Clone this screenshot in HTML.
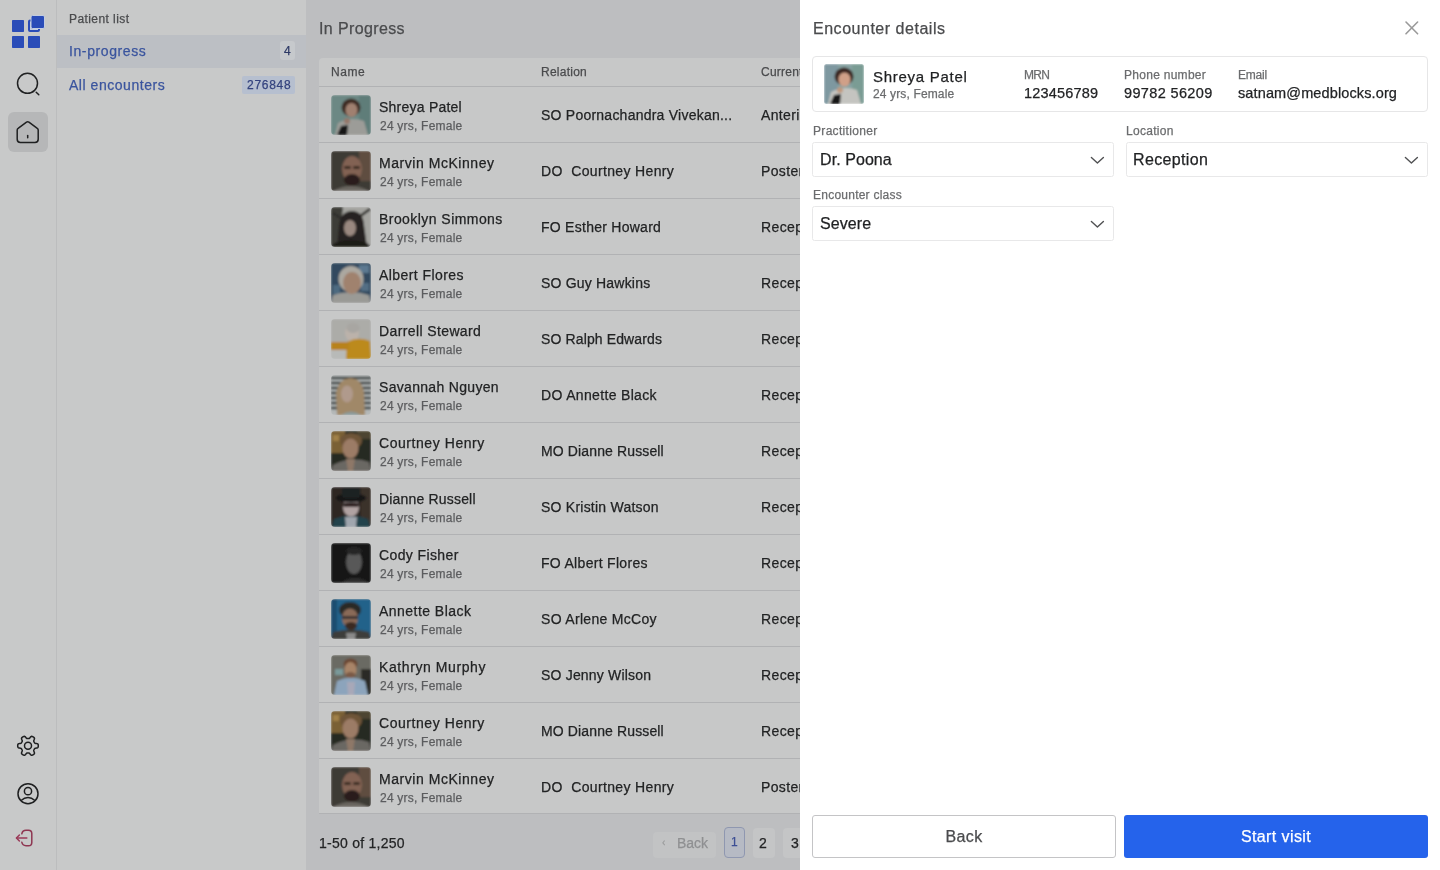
<!DOCTYPE html>
<html><head><meta charset="utf-8">
<style>
*{box-sizing:border-box;margin:0;padding:0}
html,body{width:1440px;height:870px;overflow:hidden;font-family:"Liberation Sans",sans-serif;background:#fff;position:relative}
.abs{position:absolute}
.t{position:absolute;white-space:nowrap;line-height:1;will-change:transform;-webkit-text-stroke:0.25px currentColor}
</style></head><body>
<div class="abs" style="left:0px;top:0px;width:56px;height:870px;background:#c8c9c9"></div>
<div class="abs" style="left:56px;top:0px;width:1px;height:870px;background:#bcbdbe"></div>
<svg class="abs" style="left:0;top:0" width="56" height="60" viewBox="0 0 56 60">
<rect x="12" y="20" width="12" height="12" rx="0.7" fill="#2a4cb8"/>
<rect x="12" y="36" width="12" height="12" rx="0.7" fill="#2a4cb8"/>
<rect x="28" y="36" width="12" height="12" rx="0.7" fill="#2a4cb8"/>
<rect x="29" y="20.5" width="10" height="10.5" rx="1" fill="#c3cde0" stroke="#2a4cb8" stroke-width="2"/>
<rect x="31" y="15.5" width="13.5" height="13" rx="1.5" fill="#2a4cb8" stroke="#c3cde0" stroke-width="1"/>
</svg>
<svg class="abs" style="left:8px;top:64px" width="40" height="40" viewBox="0 0 40 40">
<circle cx="19.5" cy="19.3" r="10" fill="none" stroke="#1f2021" stroke-width="1.5"/>
<line x1="28.2" y1="28.3" x2="30.8" y2="30.7" stroke="#1f2021" stroke-width="1.5" stroke-linecap="round"/>
</svg>
<div class="abs" style="left:8px;top:112px;width:40px;height:40px;background:#b6b7b8;border-radius:6px"></div>
<svg class="abs" style="left:8px;top:112px" width="40" height="40" viewBox="0 0 40 40">
<path d="M9.2 17.9 Q9.2 16.9 10.1 16.3 L18.5 10.1 Q19.7 9.3 20.9 10.1 L29.3 16.3 Q30.2 16.9 30.2 17.9 L30.2 27.3 Q30.2 30.5 27 30.5 L12.4 30.5 Q9.2 30.5 9.2 27.3 Z" fill="none" stroke="#1f2021" stroke-width="1.5" stroke-linejoin="round"/>
<line x1="19.7" y1="23.6" x2="19.7" y2="25.8" stroke="#1f2021" stroke-width="1.5" stroke-linecap="round"/>
</svg>
<svg class="abs" style="left:8px;top:726px" width="40" height="40" viewBox="0 0 40 40">
<path d="M30.30 19.80 L30.29 20.07 L30.28 20.34 L30.25 20.61 L30.19 20.87 L30.12 21.13 L29.99 21.38 L29.79 21.61 L29.48 21.81 L29.02 21.97 L28.45 22.06 L27.89 22.14 L27.43 22.21 L27.11 22.32 L26.89 22.45 L26.74 22.59 L26.62 22.75 L26.52 22.91 L26.42 23.07 L26.33 23.24 L26.24 23.40 L26.14 23.56 L26.05 23.73 L25.95 23.89 L25.86 24.06 L25.79 24.24 L25.74 24.45 L25.73 24.70 L25.80 25.03 L25.97 25.46 L26.19 25.99 L26.39 26.53 L26.48 27.00 L26.47 27.37 L26.37 27.66 L26.21 27.89 L26.03 28.09 L25.82 28.27 L25.60 28.43 L25.38 28.58 L25.15 28.72 L24.91 28.85 L24.67 28.97 L24.42 29.08 L24.17 29.16 L23.90 29.23 L23.63 29.24 L23.32 29.19 L22.99 29.02 L22.63 28.69 L22.26 28.25 L21.92 27.80 L21.62 27.44 L21.37 27.21 L21.16 27.09 L20.95 27.03 L20.76 27.01 L20.57 27.00 L20.38 27.00 L20.19 27.00 L20.00 27.00 L19.81 27.00 L19.62 27.00 L19.43 27.00 L19.24 27.01 L19.05 27.03 L18.84 27.09 L18.63 27.21 L18.38 27.44 L18.08 27.80 L17.74 28.25 L17.37 28.69 L17.01 29.02 L16.68 29.19 L16.37 29.24 L16.10 29.23 L15.83 29.16 L15.58 29.08 L15.33 28.97 L15.09 28.85 L14.85 28.72 L14.62 28.58 L14.40 28.43 L14.18 28.27 L13.97 28.09 L13.79 27.89 L13.63 27.66 L13.53 27.37 L13.52 27.00 L13.61 26.53 L13.81 25.99 L14.03 25.46 L14.20 25.03 L14.27 24.70 L14.26 24.45 L14.21 24.24 L14.14 24.06 L14.05 23.89 L13.95 23.73 L13.86 23.56 L13.76 23.40 L13.67 23.24 L13.58 23.07 L13.48 22.91 L13.38 22.75 L13.26 22.59 L13.11 22.45 L12.89 22.32 L12.57 22.21 L12.11 22.14 L11.55 22.06 L10.98 21.97 L10.52 21.81 L10.21 21.61 L10.01 21.38 L9.88 21.13 L9.81 20.87 L9.75 20.61 L9.72 20.34 L9.71 20.07 L9.70 19.80 L9.71 19.53 L9.72 19.26 L9.75 18.99 L9.81 18.73 L9.88 18.47 L10.01 18.22 L10.21 17.99 L10.52 17.79 L10.98 17.63 L11.55 17.54 L12.11 17.46 L12.57 17.39 L12.89 17.28 L13.11 17.15 L13.26 17.01 L13.38 16.85 L13.48 16.69 L13.58 16.53 L13.67 16.36 L13.76 16.20 L13.86 16.04 L13.95 15.87 L14.05 15.71 L14.14 15.54 L14.21 15.36 L14.26 15.15 L14.27 14.90 L14.20 14.57 L14.03 14.14 L13.81 13.61 L13.61 13.07 L13.52 12.60 L13.53 12.23 L13.63 11.94 L13.79 11.71 L13.97 11.51 L14.18 11.33 L14.40 11.17 L14.62 11.02 L14.85 10.88 L15.09 10.75 L15.33 10.63 L15.58 10.52 L15.83 10.44 L16.10 10.37 L16.37 10.36 L16.68 10.41 L17.01 10.58 L17.37 10.91 L17.74 11.35 L18.08 11.80 L18.38 12.16 L18.63 12.39 L18.84 12.51 L19.05 12.57 L19.24 12.59 L19.43 12.60 L19.62 12.60 L19.81 12.60 L20.00 12.60 L20.19 12.60 L20.38 12.60 L20.57 12.60 L20.76 12.59 L20.95 12.57 L21.16 12.51 L21.37 12.39 L21.62 12.16 L21.92 11.80 L22.26 11.35 L22.63 10.91 L22.99 10.58 L23.32 10.41 L23.63 10.36 L23.90 10.37 L24.17 10.44 L24.42 10.52 L24.67 10.63 L24.91 10.75 L25.15 10.88 L25.38 11.02 L25.60 11.17 L25.82 11.33 L26.03 11.51 L26.21 11.71 L26.37 11.94 L26.47 12.23 L26.48 12.60 L26.39 13.07 L26.19 13.61 L25.97 14.14 L25.80 14.57 L25.73 14.90 L25.74 15.15 L25.79 15.36 L25.86 15.54 L25.95 15.71 L26.05 15.87 L26.14 16.04 L26.24 16.20 L26.33 16.36 L26.42 16.53 L26.52 16.69 L26.62 16.85 L26.74 17.01 L26.89 17.15 L27.11 17.28 L27.43 17.39 L27.89 17.46 L28.45 17.54 L29.02 17.63 L29.48 17.79 L29.79 17.99 L29.99 18.22 L30.12 18.47 L30.19 18.73 L30.25 18.99 L30.28 19.26 L30.29 19.53Z" fill="none" stroke="#1f2021" stroke-width="1.5" stroke-linejoin="round"/>
<circle cx="20" cy="19.8" r="3.5" fill="none" stroke="#1f2021" stroke-width="1.5"/>
</svg>
<svg class="abs" style="left:8px;top:773px" width="40" height="40" viewBox="0 0 40 40">
<circle cx="20" cy="20.7" r="10" fill="none" stroke="#1f2021" stroke-width="1.5"/>
<circle cx="20" cy="18.2" r="3.6" fill="none" stroke="#1f2021" stroke-width="1.5"/>
<path d="M13 27.5 Q20 21.5 27 27.5" fill="none" stroke="#1f2021" stroke-width="1.5"/>
</svg>
<svg class="abs" style="left:4px;top:818px" width="40" height="40" viewBox="0 0 40 40">
<path d="M17.8 15.8 Q18.5 12.3 22 12.3 L24.5 12.3 Q27.8 12.3 27.8 15.6 L27.8 24.4 Q27.8 27.7 24.5 27.7 L22 27.7 Q18.5 27.7 17.8 24.2" fill="none" stroke="#8e3651" stroke-width="1.5" stroke-linecap="round"/>
<line x1="12.6" y1="20" x2="22.8" y2="20" stroke="#9a3a58" stroke-width="1.5" stroke-linecap="round"/>
<path d="M15.4 17 L12.4 20 L15.4 23" fill="none" stroke="#9a3a58" stroke-width="1.5" stroke-linecap="round" stroke-linejoin="round"/>
</svg>
<div class="abs" style="left:57px;top:0px;width:250px;height:870px;background:#c8c9c9"></div>
<div class="abs" style="left:57px;top:35px;width:249.3px;height:33px;background:#bcbfc4"></div>
<div class="t" style="left:69.4px;top:13px;font-size:12px;color:#4a4b4d;letter-spacing:0.422px;font-weight:400;">Patient list</div>
<div class="t" style="left:69.0px;top:44px;font-size:14px;color:#3a549e;letter-spacing:0.599px;font-weight:400;">In-progress</div>
<div class="t" style="left:69.0px;top:78px;font-size:14px;color:#3a549e;letter-spacing:0.537px;font-weight:400;">All encounters</div>
<div class="abs" style="left:279.5px;top:40.5px;width:15.5px;height:19px;background:#c6c9cc;border-radius:3px"></div>
<div class="t" style="left:283.5px;top:45px;font-size:12px;color:#2e3a66;letter-spacing:0.000px;font-weight:400;">4</div>
<div class="abs" style="left:242.3px;top:76px;width:52.5px;height:17.5px;background:#b6bfcf;border-radius:2px"></div>
<div class="t" style="left:246.5px;top:79px;font-size:12px;color:#34437e;letter-spacing:0.731px;font-weight:400;">276848</div>
<div class="abs" style="left:306.3px;top:0px;width:493.7px;height:870px;background:#bdbec0"></div>
<div class="t" style="left:319.2px;top:21px;font-size:16px;color:#4a4b4d;letter-spacing:0.379px;font-weight:400;">In Progress</div>
<div class="abs" style="left:319px;top:57.5px;width:481px;height:756.5px;background:#c7c8c8;border-radius:4px 0 0 0"></div>
<div class="t" style="left:331.0px;top:66px;font-size:12px;color:#4a4b4d;letter-spacing:0.534px;font-weight:400;">Name</div>
<div class="t" style="left:541.0px;top:66px;font-size:12px;color:#4a4b4d;letter-spacing:0.252px;font-weight:400;">Relation</div>
<div class="t" style="left:761.0px;top:66px;font-size:12px;color:#4a4b4d;letter-spacing:0.226px;font-weight:400;">Current location</div>
<div class="abs" style="left:319px;top:86px;width:481px;height:1px;background:#b1b2b4"></div>
<svg class="abs" style="left:331px;top:95px" width="40" height="40" viewBox="0 0 40 40"><defs><filter id="b086" x="-10%" y="-10%" width="120%" height="120%"><feGaussianBlur stdDeviation="0.9"/></filter><clipPath id="cb086"><rect width="40" height="40" rx="4"/></clipPath></defs><g clip-path="url(#cb086)"><g filter="url(#b086)"><rect width="40" height="40" fill="#6c8884"/><rect x="28" y="0" width="12" height="40" fill="#5f7d79"/>
<path d="M4 40 L7 28 Q20 21 33 26 L37 40Z" fill="#9c9c98"/><path d="M6 40 L10 31 L17 30 L16 40Z" fill="#181818"/>
<ellipse cx="20" cy="12.5" rx="9.5" ry="9" fill="#3e2c24"/><ellipse cx="20.5" cy="15" rx="6" ry="7" fill="#a08070"/>
<ellipse cx="16" cy="26" rx="3" ry="3" fill="#94786a"/></g></g></svg>
<div class="t" style="left:379.4px;top:100px;font-size:14px;color:#222324;letter-spacing:0.233px;font-weight:400;">Shreya Patel</div>
<div class="t" style="left:380.0px;top:120px;font-size:12px;color:#5c5d5f;letter-spacing:0.218px;font-weight:400;">24 yrs, Female</div>
<div class="t" style="left:541.0px;top:108px;font-size:14px;color:#222324;letter-spacing:0.235px;font-weight:400;">SO Poornachandra Vivekan...</div>
<div class="t" style="left:761.0px;top:108px;font-size:14px;color:#222324;letter-spacing:0.350px;font-weight:400;">Anterior</div>
<div class="abs" style="left:319px;top:142px;width:481px;height:1px;background:#b1b2b4"></div>
<svg class="abs" style="left:331px;top:151px" width="40" height="40" viewBox="0 0 40 40"><defs><filter id="b1142" x="-10%" y="-10%" width="120%" height="120%"><feGaussianBlur stdDeviation="0.9"/></filter><clipPath id="cb1142"><rect width="40" height="40" rx="4"/></clipPath></defs><g clip-path="url(#cb1142)"><g filter="url(#b1142)"><rect width="40" height="40" fill="#3d3a34"/><rect x="28" y="0" width="12" height="30" fill="#5e4e40"/>
<path d="M2 40 Q20 30 38 40Z" fill="#6a6660"/>
<ellipse cx="21" cy="18" rx="10" ry="13" fill="#826252"/><rect x="13" y="15" width="7" height="3" rx="1.5" fill="#3a2a24"/><rect x="22" y="15" width="7" height="3" rx="1.5" fill="#3a2a24"/>
<ellipse cx="21" cy="29" rx="8" ry="6" fill="#2a1f1a"/></g></g></svg>
<div class="t" style="left:379.4px;top:156px;font-size:14px;color:#222324;letter-spacing:0.544px;font-weight:400;">Marvin McKinney</div>
<div class="t" style="left:380.0px;top:176px;font-size:12px;color:#5c5d5f;letter-spacing:0.218px;font-weight:400;">24 yrs, Female</div>
<div class="t" style="left:541.0px;top:164px;font-size:14px;color:#222324;letter-spacing:0.351px;font-weight:400;">DO&nbsp; Courtney Henry</div>
<div class="t" style="left:761.0px;top:164px;font-size:14px;color:#222324;letter-spacing:0.350px;font-weight:400;">Posterior</div>
<div class="abs" style="left:319px;top:198px;width:481px;height:1px;background:#b1b2b4"></div>
<svg class="abs" style="left:331px;top:207px" width="40" height="40" viewBox="0 0 40 40"><defs><filter id="b2198" x="-10%" y="-10%" width="120%" height="120%"><feGaussianBlur stdDeviation="0.9"/></filter><clipPath id="cb2198"><rect width="40" height="40" rx="4"/></clipPath></defs><g clip-path="url(#cb2198)"><g filter="url(#b2198)"><rect width="40" height="40" fill="#a4a4a0"/><path d="M0 0 L12 0 L8 40 L0 40Z" fill="#3c3c38"/><path d="M28 10 L39 2" stroke="#2a2a28" stroke-width="2.5"/><path d="M2 6 L14 14" stroke="#2a2a28" stroke-width="2"/>
<path d="M6 40 L8 18 Q10 4 21 4 Q32 4 33 18 L36 40Z" fill="#282422"/>
<ellipse cx="19" cy="21" rx="6" ry="8" fill="#9a8880"/><path d="M0 40 L4 36 Q20 30 36 36 L40 40Z" fill="#1c1a19"/></g></g></svg>
<div class="t" style="left:379.4px;top:212px;font-size:14px;color:#222324;letter-spacing:0.443px;font-weight:400;">Brooklyn Simmons</div>
<div class="t" style="left:380.0px;top:232px;font-size:12px;color:#5c5d5f;letter-spacing:0.218px;font-weight:400;">24 yrs, Female</div>
<div class="t" style="left:541.0px;top:220px;font-size:14px;color:#222324;letter-spacing:0.263px;font-weight:400;">FO Esther Howard</div>
<div class="t" style="left:761.0px;top:220px;font-size:14px;color:#222324;letter-spacing:0.394px;font-weight:400;">Reception</div>
<div class="abs" style="left:319px;top:254px;width:481px;height:1px;background:#b1b2b4"></div>
<svg class="abs" style="left:331px;top:263px" width="40" height="40" viewBox="0 0 40 40"><defs><filter id="b3254" x="-10%" y="-10%" width="120%" height="120%"><feGaussianBlur stdDeviation="0.9"/></filter><clipPath id="cb3254"><rect width="40" height="40" rx="4"/></clipPath></defs><g clip-path="url(#cb3254)"><g filter="url(#b3254)"><rect width="40" height="40" fill="#324a5e"/><rect x="28" y="2" width="10" height="8" fill="#5c7890"/><rect x="2" y="22" width="7" height="9" fill="#4e6a80"/><rect x="30" y="20" width="8" height="8" fill="#526e84"/>
<path d="M0 40 L2 32 Q20 26 38 32 L40 40Z" fill="#9a9a96"/>
<ellipse cx="20" cy="16" rx="12.5" ry="13" fill="#aca8a0"/><ellipse cx="21" cy="20" rx="9" ry="11" fill="#a0826e"/></g></g></svg>
<div class="t" style="left:379.4px;top:268px;font-size:14px;color:#222324;letter-spacing:0.436px;font-weight:400;">Albert Flores</div>
<div class="t" style="left:380.0px;top:288px;font-size:12px;color:#5c5d5f;letter-spacing:0.218px;font-weight:400;">24 yrs, Female</div>
<div class="t" style="left:541.0px;top:276px;font-size:14px;color:#222324;letter-spacing:0.197px;font-weight:400;">SO Guy Hawkins</div>
<div class="t" style="left:761.0px;top:276px;font-size:14px;color:#222324;letter-spacing:0.394px;font-weight:400;">Reception</div>
<div class="abs" style="left:319px;top:310px;width:481px;height:1px;background:#b1b2b4"></div>
<svg class="abs" style="left:331px;top:319px" width="40" height="40" viewBox="0 0 40 40"><defs><filter id="b4310" x="-10%" y="-10%" width="120%" height="120%"><feGaussianBlur stdDeviation="0.9"/></filter><clipPath id="cb4310"><rect width="40" height="40" rx="4"/></clipPath></defs><g clip-path="url(#cb4310)"><g filter="url(#b4310)"><rect width="40" height="40" fill="#acaca8"/><rect x="0" y="30" width="16" height="10" fill="#b8bab8"/>
<ellipse cx="21" cy="14" rx="7" ry="8.5" fill="#bcb2aa"/><ellipse cx="22" cy="9" rx="6.5" ry="5" fill="#a8a6a2"/>
<path d="M15 40 L16 23 Q27 17 39 22 L40 40Z" fill="#bc8a1c"/><rect x="0" y="23" width="18" height="8" fill="#b8821c"/></g></g></svg>
<div class="t" style="left:379.4px;top:324px;font-size:14px;color:#222324;letter-spacing:0.386px;font-weight:400;">Darrell Steward</div>
<div class="t" style="left:380.0px;top:344px;font-size:12px;color:#5c5d5f;letter-spacing:0.218px;font-weight:400;">24 yrs, Female</div>
<div class="t" style="left:541.0px;top:332px;font-size:14px;color:#222324;letter-spacing:0.127px;font-weight:400;">SO Ralph Edwards</div>
<div class="t" style="left:761.0px;top:332px;font-size:14px;color:#222324;letter-spacing:0.394px;font-weight:400;">Reception</div>
<div class="abs" style="left:319px;top:366px;width:481px;height:1px;background:#b1b2b4"></div>
<svg class="abs" style="left:331px;top:375px" width="40" height="40" viewBox="0 0 40 40"><defs><filter id="b5366" x="-10%" y="-10%" width="120%" height="120%"><feGaussianBlur stdDeviation="0.9"/></filter><clipPath id="cb5366"><rect width="40" height="40" rx="4"/></clipPath></defs><g clip-path="url(#cb5366)"><g filter="url(#b5366)"><rect width="40" height="40" fill="#b4b8b8"/>
<g stroke="#2e3436" stroke-width="2.4"><path d="M0 3h40M0 8h40M0 13h40M0 18h40M0 23h40M0 28h40M0 33h40"/></g>
<path d="M6 40 L5 18 Q8 3 20 3 Q31 4 33 18 L34 40Z" fill="#a08868"/><ellipse cx="16" cy="19" rx="6" ry="8.5" fill="#b09a8c"/>
<path d="M10 40 Q20 33 30 40Z" fill="#8a9a9a"/></g></g></svg>
<div class="t" style="left:379.4px;top:380px;font-size:14px;color:#222324;letter-spacing:0.313px;font-weight:400;">Savannah Nguyen</div>
<div class="t" style="left:380.0px;top:400px;font-size:12px;color:#5c5d5f;letter-spacing:0.218px;font-weight:400;">24 yrs, Female</div>
<div class="t" style="left:541.0px;top:388px;font-size:14px;color:#222324;letter-spacing:0.339px;font-weight:400;">DO Annette Black</div>
<div class="t" style="left:761.0px;top:388px;font-size:14px;color:#222324;letter-spacing:0.394px;font-weight:400;">Reception</div>
<div class="abs" style="left:319px;top:422px;width:481px;height:1px;background:#b1b2b4"></div>
<svg class="abs" style="left:331px;top:431px" width="40" height="40" viewBox="0 0 40 40"><defs><filter id="b6422" x="-10%" y="-10%" width="120%" height="120%"><feGaussianBlur stdDeviation="0.9"/></filter><clipPath id="cb6422"><rect width="40" height="40" rx="4"/></clipPath></defs><g clip-path="url(#cb6422)"><g filter="url(#b6422)"><rect width="40" height="40" fill="#262a22"/><rect x="0" y="0" width="14" height="22" fill="#7a6034"/><rect x="2" y="4" width="6" height="6" fill="#a08048"/><rect x="26" y="0" width="14" height="8" fill="#4e4430"/>
<path d="M0 40 L2 34 Q20 25 38 31 L40 40Z" fill="#6a6864"/><path d="M15 28 L24 28 L22 40 L17 40Z" fill="#8e7868"/>
<ellipse cx="20" cy="10" rx="11" ry="8" fill="#6e5438"/><ellipse cx="19.5" cy="17.5" rx="8" ry="10" fill="#9c7c66"/></g></g></svg>
<div class="t" style="left:379.4px;top:436px;font-size:14px;color:#222324;letter-spacing:0.558px;font-weight:400;">Courtney Henry</div>
<div class="t" style="left:380.0px;top:456px;font-size:12px;color:#5c5d5f;letter-spacing:0.218px;font-weight:400;">24 yrs, Female</div>
<div class="t" style="left:541.0px;top:444px;font-size:14px;color:#222324;letter-spacing:0.128px;font-weight:400;">MO Dianne Russell</div>
<div class="t" style="left:761.0px;top:444px;font-size:14px;color:#222324;letter-spacing:0.394px;font-weight:400;">Reception</div>
<div class="abs" style="left:319px;top:478px;width:481px;height:1px;background:#b1b2b4"></div>
<svg class="abs" style="left:331px;top:487px" width="40" height="40" viewBox="0 0 40 40"><defs><filter id="b7478" x="-10%" y="-10%" width="120%" height="120%"><feGaussianBlur stdDeviation="0.9"/></filter><clipPath id="cb7478"><rect width="40" height="40" rx="4"/></clipPath></defs><g clip-path="url(#cb7478)"><g filter="url(#b7478)"><rect width="40" height="40" fill="#2e2622"/><rect x="30" y="0" width="10" height="40" fill="#3a322c"/>
<path d="M1 40 L3 32 Q20 25 37 32 L39 40Z" fill="#22424c"/><path d="M14 30 L26 30 L25 40 L15 40Z" fill="#a0a6ae"/>
<ellipse cx="20" cy="20" rx="8" ry="9.5" fill="#b0a2a2"/><rect x="12" y="16" width="16" height="4" rx="2" fill="#2a1c1c"/>
<ellipse cx="20" cy="11" rx="15" ry="4.5" fill="#141414"/><rect x="11" y="1" width="18" height="10" rx="3" fill="#1e2222"/></g></g></svg>
<div class="t" style="left:379.4px;top:492px;font-size:14px;color:#222324;letter-spacing:0.181px;font-weight:400;">Dianne Russell</div>
<div class="t" style="left:380.0px;top:512px;font-size:12px;color:#5c5d5f;letter-spacing:0.218px;font-weight:400;">24 yrs, Female</div>
<div class="t" style="left:541.0px;top:500px;font-size:14px;color:#222324;letter-spacing:0.235px;font-weight:400;">SO Kristin Watson</div>
<div class="t" style="left:761.0px;top:500px;font-size:14px;color:#222324;letter-spacing:0.394px;font-weight:400;">Reception</div>
<div class="abs" style="left:319px;top:534px;width:481px;height:1px;background:#b1b2b4"></div>
<svg class="abs" style="left:331px;top:543px" width="40" height="40" viewBox="0 0 40 40"><defs><filter id="b8534" x="-10%" y="-10%" width="120%" height="120%"><feGaussianBlur stdDeviation="0.9"/></filter><clipPath id="cb8534"><rect width="40" height="40" rx="4"/></clipPath></defs><g clip-path="url(#cb8534)"><g filter="url(#b8534)"><rect width="40" height="40" fill="#161616"/><path d="M10 40 Q24 30 38 40Z" fill="#2e2e2e"/>
<ellipse cx="23" cy="19" rx="8" ry="12" fill="#585858"/><ellipse cx="23" cy="8" rx="8" ry="4" fill="#262626"/></g></g></svg>
<div class="t" style="left:379.4px;top:548px;font-size:14px;color:#222324;letter-spacing:0.385px;font-weight:400;">Cody Fisher</div>
<div class="t" style="left:380.0px;top:568px;font-size:12px;color:#5c5d5f;letter-spacing:0.218px;font-weight:400;">24 yrs, Female</div>
<div class="t" style="left:541.0px;top:556px;font-size:14px;color:#222324;letter-spacing:0.306px;font-weight:400;">FO Albert Flores</div>
<div class="t" style="left:761.0px;top:556px;font-size:14px;color:#222324;letter-spacing:0.394px;font-weight:400;">Reception</div>
<div class="abs" style="left:319px;top:590px;width:481px;height:1px;background:#b1b2b4"></div>
<svg class="abs" style="left:331px;top:599px" width="40" height="40" viewBox="0 0 40 40"><defs><filter id="b9590" x="-10%" y="-10%" width="120%" height="120%"><feGaussianBlur stdDeviation="0.9"/></filter><clipPath id="cb9590"><rect width="40" height="40" rx="4"/></clipPath></defs><g clip-path="url(#cb9590)"><g filter="url(#b9590)"><rect width="40" height="40" fill="#23628a"/><rect x="0" y="0" width="6" height="40" fill="#1e4e70"/>
<path d="M0 40 L2 33 Q20 28 38 33 L40 40Z" fill="#3c3c3a"/><path d="M15 34 L25 34 L24 40 L16 40Z" fill="#8a8a8a"/>
<ellipse cx="19" cy="11" rx="11" ry="8" fill="#2a2a28"/><ellipse cx="19" cy="19" rx="8" ry="9.5" fill="#8a6a58"/>
<rect x="11" y="17" width="16" height="3" fill="#3a3030"/><ellipse cx="20" cy="27" rx="6" ry="4" fill="#3a2a24"/></g></g></svg>
<div class="t" style="left:379.4px;top:604px;font-size:14px;color:#222324;letter-spacing:0.461px;font-weight:400;">Annette Black</div>
<div class="t" style="left:380.0px;top:624px;font-size:12px;color:#5c5d5f;letter-spacing:0.218px;font-weight:400;">24 yrs, Female</div>
<div class="t" style="left:541.0px;top:612px;font-size:14px;color:#222324;letter-spacing:0.310px;font-weight:400;">SO Arlene McCoy</div>
<div class="t" style="left:761.0px;top:612px;font-size:14px;color:#222324;letter-spacing:0.394px;font-weight:400;">Reception</div>
<div class="abs" style="left:319px;top:646px;width:481px;height:1px;background:#b1b2b4"></div>
<svg class="abs" style="left:331px;top:655px" width="40" height="40" viewBox="0 0 40 40"><defs><filter id="b10646" x="-10%" y="-10%" width="120%" height="120%"><feGaussianBlur stdDeviation="0.9"/></filter><clipPath id="cb10646"><rect width="40" height="40" rx="4"/></clipPath></defs><g clip-path="url(#cb10646)"><g filter="url(#b10646)"><rect width="40" height="40" fill="#6a6a64"/><rect x="30" y="14" width="10" height="26" fill="#2a2a28"/><rect x="4" y="14" width="8" height="6" fill="#7a9a9a"/>
<path d="M3 40 L6 26 Q20 19 34 26 L37 40Z" fill="#8ca4bc"/><path d="M16 27 L24 27 L23 40 L17 40Z" fill="#a8a8b8"/>
<ellipse cx="19.5" cy="9" rx="7" ry="5.5" fill="#6a4632"/><ellipse cx="19.5" cy="15" rx="6" ry="8" fill="#a88468"/><ellipse cx="19.5" cy="20" rx="5" ry="3" fill="#7a5a46"/></g></g></svg>
<div class="t" style="left:379.4px;top:660px;font-size:14px;color:#222324;letter-spacing:0.585px;font-weight:400;">Kathryn Murphy</div>
<div class="t" style="left:380.0px;top:680px;font-size:12px;color:#5c5d5f;letter-spacing:0.218px;font-weight:400;">24 yrs, Female</div>
<div class="t" style="left:541.0px;top:668px;font-size:14px;color:#222324;letter-spacing:0.192px;font-weight:400;">SO Jenny Wilson</div>
<div class="t" style="left:761.0px;top:668px;font-size:14px;color:#222324;letter-spacing:0.394px;font-weight:400;">Reception</div>
<div class="abs" style="left:319px;top:702px;width:481px;height:1px;background:#b1b2b4"></div>
<svg class="abs" style="left:331px;top:711px" width="40" height="40" viewBox="0 0 40 40"><defs><filter id="b11702" x="-10%" y="-10%" width="120%" height="120%"><feGaussianBlur stdDeviation="0.9"/></filter><clipPath id="cb11702"><rect width="40" height="40" rx="4"/></clipPath></defs><g clip-path="url(#cb11702)"><g filter="url(#b11702)"><rect width="40" height="40" fill="#262a22"/><rect x="0" y="0" width="14" height="22" fill="#7a6034"/><rect x="2" y="4" width="6" height="6" fill="#a08048"/><rect x="26" y="0" width="14" height="8" fill="#4e4430"/>
<path d="M0 40 L2 34 Q20 25 38 31 L40 40Z" fill="#6a6864"/><path d="M15 28 L24 28 L22 40 L17 40Z" fill="#8e7868"/>
<ellipse cx="20" cy="10" rx="11" ry="8" fill="#6e5438"/><ellipse cx="19.5" cy="17.5" rx="8" ry="10" fill="#9c7c66"/></g></g></svg>
<div class="t" style="left:379.4px;top:716px;font-size:14px;color:#222324;letter-spacing:0.558px;font-weight:400;">Courtney Henry</div>
<div class="t" style="left:380.0px;top:736px;font-size:12px;color:#5c5d5f;letter-spacing:0.218px;font-weight:400;">24 yrs, Female</div>
<div class="t" style="left:541.0px;top:724px;font-size:14px;color:#222324;letter-spacing:0.128px;font-weight:400;">MO Dianne Russell</div>
<div class="t" style="left:761.0px;top:724px;font-size:14px;color:#222324;letter-spacing:0.394px;font-weight:400;">Reception</div>
<div class="abs" style="left:319px;top:758px;width:481px;height:1px;background:#b1b2b4"></div>
<svg class="abs" style="left:331px;top:767px" width="40" height="40" viewBox="0 0 40 40"><defs><filter id="b12758" x="-10%" y="-10%" width="120%" height="120%"><feGaussianBlur stdDeviation="0.9"/></filter><clipPath id="cb12758"><rect width="40" height="40" rx="4"/></clipPath></defs><g clip-path="url(#cb12758)"><g filter="url(#b12758)"><rect width="40" height="40" fill="#3d3a34"/><rect x="28" y="0" width="12" height="30" fill="#5e4e40"/>
<path d="M2 40 Q20 30 38 40Z" fill="#6a6660"/>
<ellipse cx="21" cy="18" rx="10" ry="13" fill="#826252"/><rect x="13" y="15" width="7" height="3" rx="1.5" fill="#3a2a24"/><rect x="22" y="15" width="7" height="3" rx="1.5" fill="#3a2a24"/>
<ellipse cx="21" cy="29" rx="8" ry="6" fill="#2a1f1a"/></g></g></svg>
<div class="t" style="left:379.4px;top:772px;font-size:14px;color:#222324;letter-spacing:0.544px;font-weight:400;">Marvin McKinney</div>
<div class="t" style="left:380.0px;top:792px;font-size:12px;color:#5c5d5f;letter-spacing:0.218px;font-weight:400;">24 yrs, Female</div>
<div class="t" style="left:541.0px;top:780px;font-size:14px;color:#222324;letter-spacing:0.351px;font-weight:400;">DO&nbsp; Courtney Henry</div>
<div class="t" style="left:761.0px;top:780px;font-size:14px;color:#222324;letter-spacing:0.350px;font-weight:400;">Posterior</div>
<div class="abs" style="left:319px;top:813px;width:481px;height:1px;background:#b1b2b4"></div>
<div class="t" style="left:319.0px;top:836px;font-size:14px;color:#222324;letter-spacing:0.258px;font-weight:400;">1-50 of 1,250</div>
<div class="abs" style="left:653px;top:832px;width:63px;height:26px;background:#c2c3c4;border-radius:4px"></div>
<div class="t" style="left:662.0px;top:838px;font-size:10px;color:#9a9b9c;letter-spacing:0.000px;font-weight:400;">&#8249;</div>
<div class="t" style="left:677.0px;top:836px;font-size:14px;color:#8f9092;letter-spacing:-0.041px;font-weight:400;">Back</div>
<div class="abs" style="left:723.6px;top:827px;width:21px;height:31px;background:#b6bac4;border:1px solid #8f97b0;border-radius:4px"></div>
<div class="t" style="left:731.0px;top:836px;font-size:12px;color:#3d4f94;letter-spacing:0.000px;font-weight:400;">1</div>
<div class="abs" style="left:752.7px;top:828px;width:22.5px;height:30px;background:#c4c5c6;border-radius:4px"></div>
<div class="t" style="left:758.5px;top:836px;font-size:14px;color:#222324;letter-spacing:0.000px;font-weight:400;">2</div>
<div class="abs" style="left:783px;top:828px;width:22px;height:30px;background:#c4c5c6;border-radius:4px"></div>
<div class="t" style="left:791.0px;top:836px;font-size:14px;color:#222324;letter-spacing:0.000px;font-weight:400;">3</div>
<div class="abs" style="left:800px;top:0px;width:640px;height:870px;background:#ffffff"></div>
<div class="t" style="left:812.6px;top:21px;font-size:16px;color:#4a4b4d;letter-spacing:0.523px;font-weight:400;">Encounter details</div>
<svg class="abs" style="left:1400px;top:16px" width="24" height="24" viewBox="0 0 24 24"><path d="M6 6 L17.6 17.8 M17.6 6 L6 17.8" stroke="#9a9a9a" stroke-width="1.6" stroke-linecap="round"/></svg>
<div class="abs" style="left:812px;top:56px;width:615.5px;height:55.5px;border:1px solid #e6e6e7;border-radius:4px;background:#fff"></div>
<svg class="abs" style="left:824px;top:64px" width="40" height="40" viewBox="0 0 40 40"><defs><filter id="b13d" x="-10%" y="-10%" width="120%" height="120%"><feGaussianBlur stdDeviation="0.9"/></filter><clipPath id="cb13d"><rect width="40" height="40" rx="2.5"/></clipPath></defs><g clip-path="url(#cb13d)"><g filter="url(#b13d)"><rect width="40" height="40" fill="#86a2a2"/><rect x="0" y="0" width="14" height="40" fill="#7e98a0"/><rect x="28" y="0" width="12" height="40" fill="#7a9c94"/>
<path d="M4 40 L7 28 Q20 21 33 26 L37 40Z" fill="#c4c4c0"/><path d="M6 40 L10 31 L17 30 L16 40Z" fill="#141414"/>
<ellipse cx="20" cy="12.5" rx="9.5" ry="9" fill="#3a2820"/><ellipse cx="20.5" cy="15.5" rx="6" ry="7" fill="#d0a088"/>
<ellipse cx="16" cy="26" rx="3" ry="3" fill="#c09a80"/></g></g></svg>
<div class="t" style="left:872.8px;top:69px;font-size:15px;color:#1f2022;letter-spacing:0.720px;font-weight:400;">Shreya Patel</div>
<div class="t" style="left:872.8px;top:88px;font-size:12px;color:#6b6c6e;letter-spacing:0.134px;font-weight:400;">24 yrs, Female</div>
<div class="t" style="left:1024.4px;top:69px;font-size:12px;color:#6b6c6e;letter-spacing:-0.764px;font-weight:400;">MRN</div>
<div class="t" style="left:1024.4px;top:86px;font-size:14.5px;color:#222325;letter-spacing:0.178px;font-weight:400;">123456789</div>
<div class="t" style="left:1124.4px;top:69px;font-size:12px;color:#6b6c6e;letter-spacing:0.280px;font-weight:400;">Phone number</div>
<div class="t" style="left:1124.4px;top:86px;font-size:14.5px;color:#222325;letter-spacing:0.353px;font-weight:400;">99782 56209</div>
<div class="t" style="left:1238.3px;top:69px;font-size:12px;color:#6b6c6e;letter-spacing:-0.202px;font-weight:400;">Email</div>
<div class="t" style="left:1238.3px;top:86px;font-size:14.5px;color:#222325;letter-spacing:0.123px;font-weight:400;">satnam@medblocks.org</div>
<div class="t" style="left:812.6px;top:125px;font-size:12px;color:#6b6c6e;letter-spacing:0.315px;font-weight:400;">Practitioner</div>
<div class="abs" style="left:812px;top:142px;width:302px;height:35px;border:1px solid #e8e8e9;border-radius:2.5px;background:#fff"></div>
<div class="t" style="left:819.6px;top:152px;font-size:16px;color:#1f2022;letter-spacing:0.071px;font-weight:400;">Dr. Poona</div>
<svg class="abs" style="left:1090px;top:155px" width="16" height="9" viewBox="0 0 16 9"><path d="M1.4 2.4 L7.4 8 L13.4 2.4" fill="none" stroke="#505153" stroke-width="1.4" stroke-linecap="round" stroke-linejoin="round"/></svg>
<div class="t" style="left:1126.1px;top:125px;font-size:12px;color:#6b6c6e;letter-spacing:0.292px;font-weight:400;">Location</div>
<div class="abs" style="left:1125.5px;top:142px;width:302px;height:35px;border:1px solid #e8e8e9;border-radius:2.5px;background:#fff"></div>
<div class="t" style="left:1133.1px;top:152px;font-size:16px;color:#1f2022;letter-spacing:0.360px;font-weight:400;">Reception</div>
<svg class="abs" style="left:1403.5px;top:155px" width="16" height="9" viewBox="0 0 16 9"><path d="M1.4 2.4 L7.4 8 L13.4 2.4" fill="none" stroke="#505153" stroke-width="1.4" stroke-linecap="round" stroke-linejoin="round"/></svg>
<div class="t" style="left:812.6px;top:189px;font-size:12px;color:#6b6c6e;letter-spacing:0.238px;font-weight:400;">Encounter class</div>
<div class="abs" style="left:812px;top:206px;width:302px;height:35px;border:1px solid #e8e8e9;border-radius:2.5px;background:#fff"></div>
<div class="t" style="left:819.6px;top:216px;font-size:16px;color:#1f2022;letter-spacing:0.081px;font-weight:400;">Severe</div>
<svg class="abs" style="left:1090px;top:219px" width="16" height="9" viewBox="0 0 16 9"><path d="M1.4 2.4 L7.4 8 L13.4 2.4" fill="none" stroke="#505153" stroke-width="1.4" stroke-linecap="round" stroke-linejoin="round"/></svg>
<div class="abs" style="left:812px;top:815px;width:304px;height:43px;border:1px solid #c4c4c6;border-radius:3px;background:#fff"></div>
<div class="t" style="left:812px;top:815px;width:304px;height:43px;line-height:43px;text-align:center;font-size:16px;color:#4a4b4d;letter-spacing:0.4px">Back</div>
<div class="abs" style="left:1124px;top:815px;width:304px;height:43px;border-radius:3px;background:#2563eb"></div>
<div class="t" style="left:1124px;top:815px;width:304px;height:43px;line-height:43px;text-align:center;font-size:16px;color:#ffffff;letter-spacing:0.4px">Start visit</div>
</body></html>
